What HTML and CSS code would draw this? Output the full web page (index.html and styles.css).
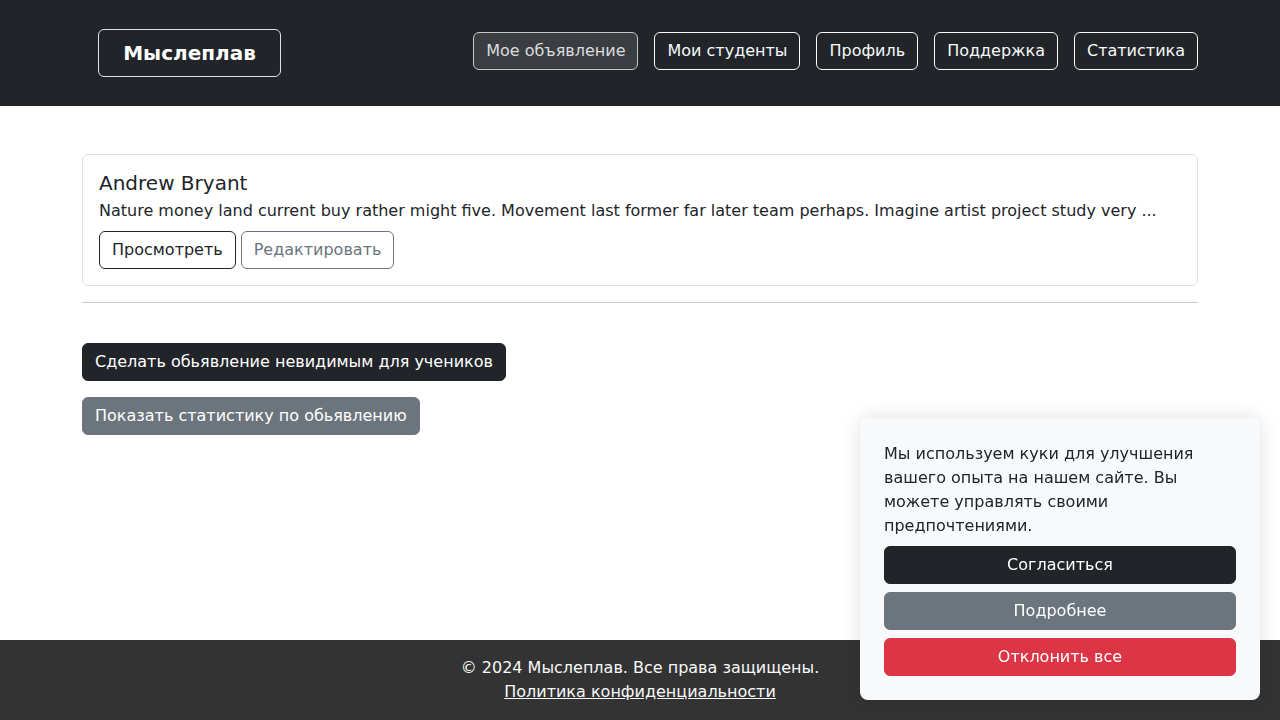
FILE: index.html
```html
<!DOCTYPE html>
<html lang="ru">
<head>
<meta charset="utf-8">
<title>Мыслеплав</title>
<link rel="stylesheet" href="styles.css">
</head>
<body>
<header class="navbar">
  <div class="container nav-inner">
    <a class="brand" href="#">Мыслеплав</a>
    <nav class="nav-links">
      <a class="nav-btn active" href="#">Мое объявление</a>
      <a class="nav-btn" href="#">Мои студенты</a>
      <a class="nav-btn" href="#">Профиль</a>
      <a class="nav-btn" href="#">Поддержка</a>
      <a class="nav-btn" href="#">Статистика</a>
    </nav>
  </div>
</header>

<main class="container main">
  <div class="card">
    <h5 class="card-title">Andrew Bryant</h5>
    <p class="card-text">Nature money land current buy rather might five. Movement last former far later team perhaps. Imagine artist project study very ...</p>
    <div class="card-actions">
      <a class="btn btn-outline-dark" href="#">Просмотреть</a>
      <a class="btn btn-outline-secondary" href="#">Редактировать</a>
    </div>
  </div>
  <hr class="divider">
  <div class="actions">
    <button class="btn btn-dark">Сделать обьявление невидимым для учеников</button>
    <button class="btn btn-secondary">Показать статистику по обьявлению</button>
  </div>
</main>

<footer class="footer">
  <div>© 2024 Мыслеплав. Все права защищены.</div>
  <a class="footer-link" href="#">Политика конфиденциальности</a>
</footer>

<div class="cookie">
  <p class="cookie-text">Мы используем куки для улучшения вашего опыта на нашем сайте. Вы можете управлять своими предпочтениями.</p>
  <div class="cookie-buttons">
    <button class="btn btn-dark btn-block">Согласиться</button>
    <button class="btn btn-secondary btn-block">Подробнее</button>
    <button class="btn btn-danger btn-block">Отклонить все</button>
  </div>
</div>
</body>
</html>
```

FILE: styles.css
```css
* { box-sizing: border-box; }

html, body {
  margin: 0;
  padding: 0;
}

body {
  font-family: "DejaVu Sans", sans-serif;
  font-size: 16px;
  line-height: 1.5;
  color: #212529;
  background: #fff;
  min-height: 100vh;
  display: flex;
  flex-direction: column;
}

.container {
  width: 1116px;
  margin: 0 auto;
}

/* Navbar */
.navbar {
  background: #212529;
  height: 106px;
  display: flex;
  align-items: center;
}

.nav-inner {
  display: flex;
  align-items: center;
  justify-content: space-between;
}

.brand {
  margin-left: 16px;
  display: inline-flex;
  align-items: center;
  justify-content: center;
  width: 183px;
  height: 48px;
  border: 1px solid #dee2e6;
  border-radius: 6px;
  color: #fff;
  font-weight: bold;
  font-size: 20px;
  text-decoration: none;
}

.nav-links {
  display: flex;
  gap: 16px;
  margin-bottom: 4px;
}

.nav-btn {
  display: inline-block;
  height: 38px;
  padding: 6px 12px;
  border: 1px solid #f8f9fa;
  border-radius: 6px;
  color: #f8f9fa;
  text-decoration: none;
  font-size: 16px;
  line-height: 24px;
}

.nav-btn.active {
  background: #3a3e43;
  border-color: #c6c7c8;
  color: #dadcde;
}

/* Main */
.main {
  padding-top: 48px;
}

.card {
  border: 1px solid #dfe0e1;
  border-radius: 6px;
  padding: 16px;
}

.card-title {
  margin: 0 0 4px;
  font-size: 20px;
  font-weight: 500;
  line-height: 24px;
}

.card-text {
  margin: 0 0 8px;
  white-space: nowrap;
  overflow: hidden;
}

.card-actions {
  display: flex;
  gap: 5px;
}

.btn {
  display: inline-block;
  height: 38px;
  padding: 6px 12px;
  border: 1px solid transparent;
  border-radius: 6px;
  font-family: inherit;
  font-size: 16px;
  line-height: 24px;
  text-decoration: none;
  text-align: center;
  cursor: pointer;
  white-space: nowrap;
}

.btn-outline-dark {
  border-color: #212529;
  color: #212529;
}

.btn-outline-secondary {
  border-color: #6c757d;
  color: #6c757d;
}

.btn-dark {
  background: #212529;
  border-color: #212529;
  color: #fff;
}

.btn-secondary {
  background: #6c757d;
  border-color: #6c757d;
  color: #fff;
}

.btn-danger {
  background: #dc3545;
  border-color: #dc3545;
  color: #fff;
}

.divider {
  margin: 16px 0 0;
  border: 0;
  border-top: 1px solid #c8c9ca;
}

.actions {
  padding-top: 40px;
  display: flex;
  flex-direction: column;
  align-items: flex-start;
  gap: 16px;
}

/* Footer */
.footer {
  margin-top: auto;
  background: #333333;
  color: #f8f9fa;
  text-align: center;
  padding: 16px 0;
  height: 80px;
}

.footer-link {
  color: #f8f9fa;
  text-decoration: underline;
}

/* Cookie banner */
.cookie {
  position: fixed;
  right: 20px;
  bottom: 20px;
  width: 400px;
  padding: 24px;
  background: #f8f9fa;
  border-radius: 8px;
  box-shadow: 0 0 20px rgba(0, 0, 0, 0.12);
}

.cookie-text {
  margin: 0 0 8px;
}

.cookie-buttons {
  display: flex;
  flex-direction: column;
  gap: 8px;
}

.btn-block {
  width: 100%;
}
```
